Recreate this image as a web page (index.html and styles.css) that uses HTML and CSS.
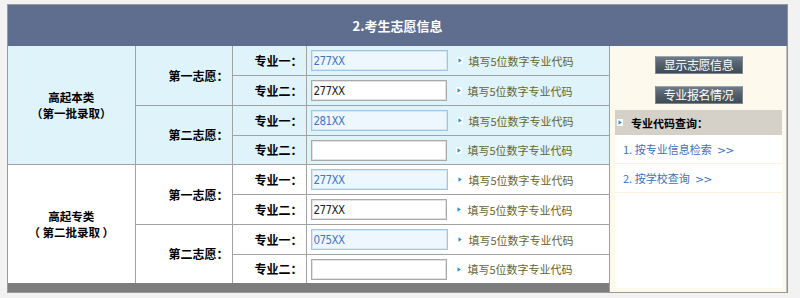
FILE: index.html
```html
<!DOCTYPE html>
<html lang="zh-CN">
<head>
<meta charset="utf-8">
<title>考生志愿信息</title>
<link rel="stylesheet" href="styles.css">
</head>
<body>
<div class="panel">
  <div class="title">2.考生志愿信息</div>
  <div class="body">
    <div class="main">
      <table class="grid">
        <colgroup><col class="c1"><col class="c2"><col class="c3"><col class="c4"></colgroup>
        <tbody class="blue">
          <tr>
            <td rowspan="4" class="cat"><div class="cat-l">高起本类</div><div class="cat-l">（第一批录取）</div></td>
            <td rowspan="2" class="pref">第一志愿：</td>
            <td class="lbl">专业一：</td>
            <td class="fld"><input class="in in-b" type="text" value="277XX" readonly><span class="hint"><svg class="arr" width="6" height="7" viewBox="0 0 6 7"><rect x="0" y="0" width="6" height="7" fill="#fff"/><path d="M1.5 1.2 L4.8 3.5 L1.5 5.8 Z" fill="#2b8fdc"/></svg>填写5位数字专业代码</span></td>
          </tr>
          <tr>
            <td class="lbl">专业二：</td>
            <td class="fld"><input class="in in-w" type="text" value="277XX" readonly><span class="hint"><svg class="arr" width="6" height="7" viewBox="0 0 6 7"><rect x="0" y="0" width="6" height="7" fill="#fff"/><path d="M1.5 1.2 L4.8 3.5 L1.5 5.8 Z" fill="#2b8fdc"/></svg>填写5位数字专业代码</span></td>
          </tr>
          <tr>
            <td rowspan="2" class="pref">第二志愿：</td>
            <td class="lbl">专业一：</td>
            <td class="fld"><input class="in in-b" type="text" value="281XX" readonly><span class="hint"><svg class="arr" width="6" height="7" viewBox="0 0 6 7"><rect x="0" y="0" width="6" height="7" fill="#fff"/><path d="M1.5 1.2 L4.8 3.5 L1.5 5.8 Z" fill="#2b8fdc"/></svg>填写5位数字专业代码</span></td>
          </tr>
          <tr class="short">
            <td class="lbl">专业二：</td>
            <td class="fld"><input class="in in-w" type="text" value="" readonly><span class="hint"><svg class="arr" width="6" height="7" viewBox="0 0 6 7"><rect x="0" y="0" width="6" height="7" fill="#fff"/><path d="M1.5 1.2 L4.8 3.5 L1.5 5.8 Z" fill="#2b8fdc"/></svg>填写5位数字专业代码</span></td>
          </tr>
        </tbody>
        <tbody class="white">
          <tr>
            <td rowspan="4" class="cat"><div class="cat-l">高起专类</div><div class="cat-l">（ 第二批录取 ）</div></td>
            <td rowspan="2" class="pref">第一志愿：</td>
            <td class="lbl">专业一：</td>
            <td class="fld"><input class="in in-b" type="text" value="277XX" readonly><span class="hint"><svg class="arr" width="6" height="7" viewBox="0 0 6 7"><rect x="0" y="0" width="6" height="7" fill="#fff"/><path d="M1.5 1.2 L4.8 3.5 L1.5 5.8 Z" fill="#2b8fdc"/></svg>填写5位数字专业代码</span></td>
          </tr>
          <tr>
            <td class="lbl">专业二：</td>
            <td class="fld"><input class="in in-w" type="text" value="277XX" readonly><span class="hint"><svg class="arr" width="6" height="7" viewBox="0 0 6 7"><rect x="0" y="0" width="6" height="7" fill="#fff"/><path d="M1.5 1.2 L4.8 3.5 L1.5 5.8 Z" fill="#2b8fdc"/></svg>填写5位数字专业代码</span></td>
          </tr>
          <tr>
            <td rowspan="2" class="pref">第二志愿：</td>
            <td class="lbl">专业一：</td>
            <td class="fld"><input class="in in-b" type="text" value="075XX" readonly><span class="hint"><svg class="arr" width="6" height="7" viewBox="0 0 6 7"><rect x="0" y="0" width="6" height="7" fill="#fff"/><path d="M1.5 1.2 L4.8 3.5 L1.5 5.8 Z" fill="#2b8fdc"/></svg>填写5位数字专业代码</span></td>
          </tr>
          <tr class="short">
            <td class="lbl">专业二：</td>
            <td class="fld"><input class="in in-w" type="text" value="" readonly><span class="hint"><svg class="arr" width="6" height="7" viewBox="0 0 6 7"><rect x="0" y="0" width="6" height="7" fill="#fff"/><path d="M1.5 1.2 L4.8 3.5 L1.5 5.8 Z" fill="#2b8fdc"/></svg>填写5位数字专业代码</span></td>
          </tr>
        </tbody>
      </table>
      <div class="foot"></div>
    </div>
    <div class="side">
      <button class="btn" type="button">显示志愿信息</button>
      <button class="btn btn2" type="button">专业报名情况</button>
      <div class="box">
        <div class="box-head"><svg class="arr" width="6" height="7" viewBox="0 0 6 7"><rect x="0" y="0" width="6" height="7" fill="#fff"/><path d="M1.5 1.2 L4.8 3.5 L1.5 5.8 Z" fill="#2b8fdc"/></svg>专业代码查询：</div>
        <a class="link" href="#">1. 按专业信息检索 <span class="gt">&gt;&gt;</span></a>
        <a class="link" href="#">2. 按学校查询 <span class="gt">&gt;&gt;</span></a>
        <div class="box-rest"></div>
      </div>
    </div>
  </div>
</div>
</body>
</html>
```
FILE: styles.css
```css
html, body {
  margin: 0;
  padding: 0;
  background: #f2f2f2;
}
body {
  font-family: "Noto Sans CJK SC", "Noto Sans", sans-serif;
  font-size: 12px;
  color: #000;
}
.panel {
  margin: 4px 0 0 7px;
  width: 779px;
  border: 1px solid #9a9a9a;
  border-right: 1px solid #8e8e8e;
  background: #fff;
}
.title {
  height: 41px;
  background: #5f6e8e;
  color: #fff;
  font-weight: bold;
  font-size: 13px;
  line-height: 41px;
  text-align: center;
}
.body {
  display: flex;
}
.main {
  width: 601px;
  display: flex;
  flex-direction: column;
}
.grid {
  width: 601px;
  border-collapse: collapse;
  border-style: hidden;
  table-layout: fixed;
}
.c1 { width: 127px; }
.c2 { width: 97px; }
.c3 { width: 74px; }
.c4 { width: 303px; }
.grid td {
  border: 1px solid #a2a2a2;
  padding: 0;
  height: 29px;
}
.grid tr.short td { height: 28px; }
.blue td { background: #dff3fb; }
.white td { background: #fff; }
.cat {
  text-align: center;
  font-weight: bold;
  font-size: 11.5px;
}
.cat-l {
  height: 16px;
  line-height: 16px;
  white-space: nowrap;
}
.pref, .lbl {
  text-align: right;
  font-weight: bold;
  line-height: 14px;
}
.pref { padding-right: 3px !important; }
.lbl { padding-right: 3px !important; }
.fld {
  padding-left: 4px !important;
  white-space: nowrap;
}
.in {
  box-sizing: border-box;
  width: 137px;
  height: 21px;
  margin: 0;
  padding: 0 2px;
  vertical-align: middle;
  font-family: "DejaVu Sans Condensed", "DejaVu Sans", sans-serif;
  font-stretch: condensed;
  font-size: 11.5px;
  letter-spacing: -0.6px;
  outline: none;
}
.in-b {
  background: #eef7fe;
  border: 1px solid #9fc6e7;
  box-shadow: inset 0 0 0 1px #d3e7f7;
  color: #3f78c8;
}
.in-w {
  width: 136px;
  background: #fff;
  border: 1px solid #a9a9a9;
  box-shadow: inset 0 0 0 1px #e2e2e2;
  color: #222;
}
.hint {
  display: inline-flex;
  align-items: center;
  vertical-align: middle;
  margin-left: 9px;
  font-size: 11px;
  color: #666630;
  line-height: 14px;
}
.arr {
  display: block;
  margin-right: 6px;
  flex: none;
}
.foot {
  height: 9px;
  background: #7d7d7d;
}
.side {
  flex: 1;
  background: #fdf9ec;
  border-left: 1px solid #a0a0a0;
  border-right: 1px solid #c4c4c4;
  padding: 10px 4px 4px 5px;
  display: flex;
  flex-direction: column;
  align-items: center;
}
.btn {
  width: 88px;
  height: 18px;
  padding: 0;
  border: 1px solid #7b8792;
  border-top-color: #9aa6b0;
  background: linear-gradient(#6f7d89 0%, #56636f 40%, #3f4b56 100%);
  color: #fff;
  font-family: "Noto Sans CJK SC", sans-serif;
  font-size: 12px;
  letter-spacing: -0.4px;
  line-height: 16px;
}
.btn2 { margin-top: 12px; }
.box {
  margin-top: 6px;
  align-self: stretch;
  flex: 1;
  display: flex;
  flex-direction: column;
  background: #fff;
}
.box-head {
  height: 25px;
  background: #d5d1c9;
  display: flex;
  align-items: center;
  padding-left: 2px;
  font-weight: bold;
  font-size: 11px;
}
.box-head .arr { margin-right: 8px; }
.link {
  display: block;
  height: 28px;
  line-height: 28px;
  padding-left: 8px;
  border-bottom: 1px solid #faf3df;
  color: #3b6fc3;
  font-size: 11px;
  text-decoration: none;
}
.gt {
  font-family: "DejaVu Sans", sans-serif;
  letter-spacing: -1px;
  margin-left: 3px;
}
.box-rest { flex: 1; }
```
